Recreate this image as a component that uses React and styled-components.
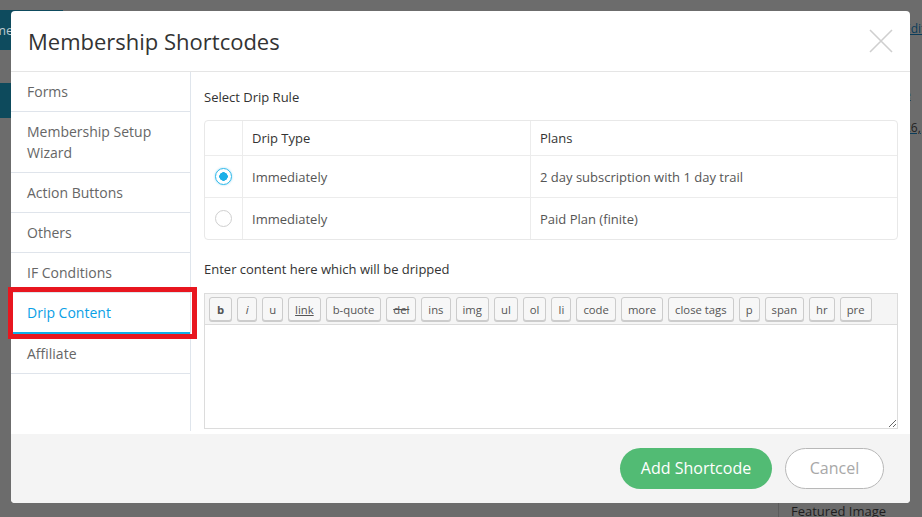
import React, { useState } from "react";
import styled, { createGlobalStyle } from "styled-components";

const GlobalStyle = createGlobalStyle`
  html, body {
    margin: 0;
    padding: 0;
    width: 922px;
    height: 517px;
    overflow: hidden;
    font-family: "Open Sans", "Liberation Sans", sans-serif;
  }
  * { box-sizing: border-box; }
`;

const tabs = [
  "Forms",
  "Membership Setup Wizard",
  "Action Buttons",
  "Others",
  "IF Conditions",
  "Drip Content",
  "Affiliate",
];

const rules = [
  { type: "Immediately", plan: "2 day subscription with 1 day trail" },
  { type: "Immediately", plan: "Paid Plan (finite)" },
];

const tools = [
  { label: "b", bold: true },
  { label: "i", italic: true },
  { label: "u" },
  { label: "link", underline: true },
  { label: "b-quote" },
  { label: "del", strike: true },
  { label: "ins" },
  { label: "img" },
  { label: "ul" },
  { label: "ol" },
  { label: "li" },
  { label: "code" },
  { label: "more" },
  { label: "close tags" },
  { label: "p" },
  { label: "span" },
  { label: "hr" },
  { label: "pre" },
];

const App = () => {
  const [active, setActive] = useState("Drip Content");
  const [rule, setRule] = useState(0);

  return (
    <Page>
      <GlobalStyle />
      <Backdrop>
        <TopRow>
          <AdminButton>me</AdminButton>
        </TopRow>
        <LeftStrip />
        <SideLinks>
          <span>Edit</span>
          <span>t</span>
          <span>e</span>
          <Plain>26,</Plain>
        </SideLinks>
        <BottomBox>Featured Image</BottomBox>
      </Backdrop>

      <Modal>
        <Header>
          <Title>Membership Shortcodes</Title>
          <Close aria-label="close">
            <svg width="24" height="24" viewBox="0 0 24 24">
              <path d="M1 1 L23 23 M23 1 L1 23" stroke="#cfcfcf" strokeWidth="1.6" fill="none" />
            </svg>
          </Close>
        </Header>

        <Body>
          <Sidebar>
            {tabs.map((t) => (
              <Tab key={t} $active={active === t} onClick={() => setActive(t)}>
                {t}
              </Tab>
            ))}
          </Sidebar>

          <Content>
            <Label>Select Drip Rule</Label>
            <Table>
              <HeadRow>
                <Cell />
                <Cell>Drip Type</Cell>
                <Cell>Plans</Cell>
              </HeadRow>
              {rules.map((r, i) => (
                <Row key={i} onClick={() => setRule(i)}>
                  <Cell>
                    <Radio $checked={rule === i} />
                  </Cell>
                  <Cell>{r.type}</Cell>
                  <Cell>{r.plan}</Cell>
                </Row>
              ))}
            </Table>

            <Label $gap>Enter content here which will be dripped</Label>
            <Editor>
              <Toolbar>
                {tools.map((t) => (
                  <ToolButton
                    key={t.label}
                    $bold={t.bold}
                    $italic={t.italic}
                    $underline={t.underline}
                    $strike={t.strike}
                  >
                    {t.label}
                  </ToolButton>
                ))}
              </Toolbar>
              <TextArea />
            </Editor>
          </Content>
        </Body>

        <Footer>
          <PrimaryButton>Add Shortcode</PrimaryButton>
          <GhostButton>Cancel</GhostButton>
        </Footer>

        <Highlight />
      </Modal>
    </Page>
  );
};

const Page = styled.div`
  position: relative;
  width: 922px;
  height: 517px;
  background: #6c6c6c;
  overflow: hidden;
`;

const Backdrop = styled.div`
  display: grid;
  grid-template-columns: 11px 1fr 14px;
  grid-template-rows: 50px 1fr 22px;
  width: 100%;
  height: 100%;
`;

const TopRow = styled.div`
  grid-column: 1 / 3;
  padding-top: 10px;
`;

const AdminButton = styled.div`
  width: 63px;
  height: 40px;
  background: #0e4b5e;
  color: #b9c9cf;
  font-size: 13px;
  line-height: 40px;
  text-indent: -6px;
  overflow: hidden;
`;

const LeftStrip = styled.div`
  grid-column: 1;
  grid-row: 2;
  margin-top: 33px;
  height: 35px;
  background: #0d4a5c;
`;

const SideLinks = styled.div`
  grid-column: 3;
  grid-row: 1 / 3;
  display: flex;
  flex-direction: column;
  gap: 16px;
  padding-top: 20px;
  font-size: 12px;
  color: #0a3c5a;
  text-decoration: underline;
  white-space: nowrap;
  span { text-indent: -4px; }
`;

const Plain = styled.span`
  color: #222;
  text-decoration: none;
  display: inline-block;
`;

const BottomBox = styled.div`
  grid-column: 2 / 4;
  grid-row: 3;
  justify-self: end;
  width: 144px;
  padding: 7px 0 0 12px;
  font-size: 13px;
  color: #1e1e1e;
  border-left: 1px solid #5c5c5c;
`;

const Modal = styled.div`
  position: absolute;
  top: 11px;
  left: 11px;
  width: 899px;
  height: 492px;
  display: flex;
  flex-direction: column;
  background: #fff;
  border-radius: 4px;
`;

const Header = styled.div`
  height: 61px;
  flex: none;
  display: flex;
  align-items: center;
  justify-content: space-between;
  padding: 0 17px 0 17px;
  border-bottom: 1px solid #e5e5e5;
`;

const Title = styled.h2`
  margin: 0;
  font-size: 22px;
  font-weight: 400;
  color: #333;
`;

const Close = styled.button`
  border: 0;
  background: none;
  padding: 0;
  width: 24px;
  height: 24px;
  cursor: pointer;
  margin-top: -1px;
`;

const Body = styled.div`
  flex: 1;
  display: flex;
  min-height: 0;
`;

const Sidebar = styled.div`
  width: 180px;
  flex: none;
  border-right: 1px solid #dfe5ec;
  margin-bottom: 3px;
`;

const Tab = styled.div`
  padding: 9px 24px 9px 16px;
  font-size: 14px;
  line-height: 21px;
  color: ${(p) => (p.$active ? "#0aa0e6" : "#666")};
  border-bottom: ${(p) => (p.$active ? "2px solid #10aee8" : "1px solid #dfe4eb")};
  cursor: pointer;
`;

const Content = styled.div`
  flex: 1;
  padding: 15px 12px 0 13px;
  display: flex;
  flex-direction: column;
`;

const Label = styled.div`
  font-size: 13px;
  line-height: 20px;
  color: #333;
  margin-top: ${(p) => (p.$gap ? "19px" : "0")};
  margin-bottom: ${(p) => (p.$gap ? "14px" : "13px")};
`;

const Table = styled.div`
  border: 1px solid #e8e8e8;
  border-radius: 4px;
`;

const Row = styled.div`
  display: grid;
  grid-template-columns: 37px 288px 1fr;
  height: 42px;
  border-top: 1px solid #ececec;
  cursor: pointer;
`;

const HeadRow = styled(Row)`
  height: 34px;
  border-top: 0;
  color: #333;
  cursor: default;
`;

const Cell = styled.div`
  display: flex;
  align-items: center;
  padding-left: 9px;
  font-size: 13px;
  color: inherit;
  & + & {
    border-left: 1px solid #ececec;
  }
  ${Row} > & {
    color: #555;
  }
  ${HeadRow} > & {
    color: #333;
  }
`;

const Radio = styled.span`
  width: 17px;
  height: 17px;
  margin-left: 1px;
  border-radius: 50%;
  border: 1px solid ${(p) => (p.$checked ? "#2bb8ea" : "#cfcfcf")};
  background: ${(p) =>
    p.$checked
      ? "radial-gradient(circle, #1bb0e8 0 4px, #fff 4.5px)"
      : "#fff"};
  box-shadow: ${(p) => (p.$checked ? "0 0 2px rgba(30,170,230,0.5)" : "none")};
`;

const Editor = styled.div`
  border: 1px solid #dcdcdc;
  display: flex;
  flex-direction: column;
`;

const Toolbar = styled.div`
  display: flex;
  flex-wrap: wrap;
  gap: 5px;
  padding: 3px 4px 3px;
  background: #f5f5f5;
  border-bottom: 1px solid #dcdcdc;
`;

const ToolButton = styled.button`
  height: 24px;
  min-width: 20px;
  font-family: "Open Sans", "Liberation Sans", sans-serif;
  font-size: 11.3px;
  color: #555;
  background: #f7f7f7;
  border: 1px solid #cccccc;
  border-radius: 3px;
  box-shadow: 0 1px 0 #ccc;
  font-weight: ${(p) => (p.$bold ? 700 : 400)};
  font-style: ${(p) => (p.$italic ? "italic" : "normal")};
  text-decoration: ${(p) =>
    p.$underline ? "underline" : p.$strike ? "line-through" : "none"};
  padding: ${(p) => (p.$italic || p.$bold ? "0 7px" : "0 6px")};
`;

const TextArea = styled.textarea`
  height: 103px;
  border: 0;
  resize: vertical;
  font-family: "Open Sans", "Liberation Sans", sans-serif;
  outline: none;
`;

const Footer = styled.div`
  height: 69px;
  flex: none;
  display: flex;
  align-items: center;
  justify-content: flex-end;
  gap: 13px;
  padding: 0 26px 1px 0;
  background: #f4f4f4;
  border-radius: 0 0 4px 4px;
`;

const PrimaryButton = styled.button`
  height: 41px;
  width: 152px;
  border: 0;
  border-radius: 21px;
  background: #52bb74;
  color: #fff;
  font-family: "Open Sans", "Liberation Sans", sans-serif;
  font-size: 16px;
  cursor: pointer;
`;

const GhostButton = styled(PrimaryButton)`
  width: 99px;
  background: #fff;
  border: 1px solid #b8b8b8;
  color: #a8a8a8;
`;

const Highlight = styled.div`
  position: absolute;
  left: -3px;
  top: 276px;
  width: 189px;
  height: 52px;
  border: 5px solid #e8161f;
  pointer-events: none;
`;

export default App;
